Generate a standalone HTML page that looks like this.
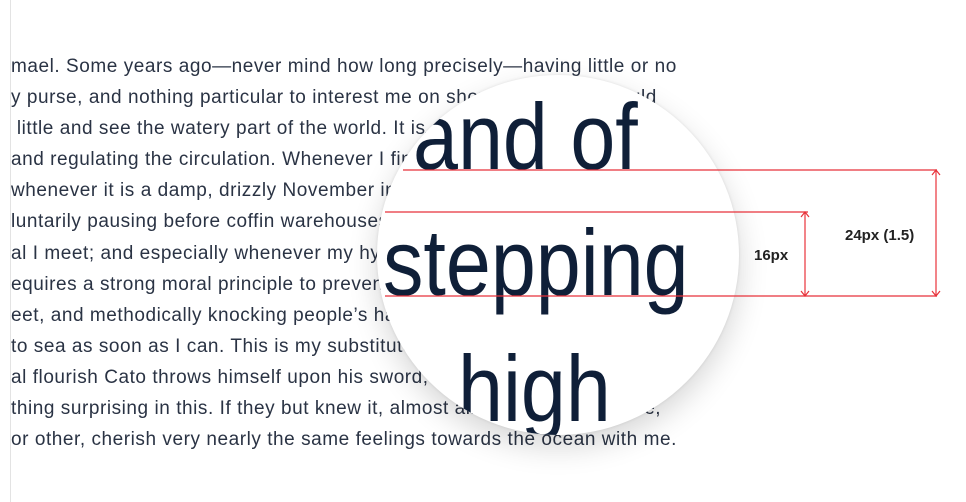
<!DOCTYPE html>
<html><head><style>
html,body{margin:0;padding:0;background:#fff;width:966px;height:502px;overflow:hidden;position:relative}
.rule{position:absolute;left:10px;top:0;width:1px;height:502px;background:#e3e3e3}
.txt{position:absolute;left:11px;top:51px;font-family:"Liberation Sans",sans-serif;font-size:19px;letter-spacing:0.55px;line-height:31.1px;color:#2a3344;white-space:nowrap}
.circle{position:absolute;left:377px;top:75px;width:362px;height:360px;border-radius:50%;background:#fff;box-shadow:0 12px 30px rgba(0,0,0,0.16),0 0 3px rgba(0,0,0,0.1);overflow:hidden}
.big{position:absolute;font-family:"Liberation Sans",sans-serif;font-size:94px;color:#0f1f38;white-space:nowrap;line-height:1;transform:scaleX(0.86);transform-origin:0 0}
.lbl{position:absolute;font-family:"Liberation Sans",sans-serif;font-weight:bold;font-size:15px;color:#222}
</style></head><body>
<div class="rule"></div>
<div class="txt">
mael. Some years ago—never mind how long precisely—having little or no<br>
y purse, and nothing particular to interest me on shore, I thought I would<br>
&nbsp;little and see the watery part of the world. It is a way I have of driving<br>
and regulating the circulation. Whenever I find myself growing grim<br>
whenever it is a damp, drizzly November in my soul; whenever I find<br>
luntarily pausing before coffin warehouses, and bringing up the<br>
al I meet; and especially whenever my hypos get such an upper<br>
equires a strong moral principle to prevent me from deliberately<br>
eet, and methodically knocking people’s hats off—then, I account it<br>
to sea as soon as I can. This is my substitute for pistol and ball.<br>
al flourish Cato throws himself upon his sword; I quietly take to the<br>
thing surprising in this. If they but knew it, almost all men in their degree,<br>
or other, cherish very nearly the same feelings towards the ocean with me.
</div>
<div class="circle">
<div class="big" style="left:36px;top:15px">and of</div>
<div class="big" style="left:6px;top:141px">stepping</div>
<div class="big" style="left:81px;top:267px">high</div>
</div>
<svg width="966" height="502" style="position:absolute;left:0;top:0" fill="none" stroke="#e8323a" stroke-width="1.2">
<line x1="403" y1="170" x2="937" y2="170"/>
<line x1="385" y1="212" x2="808" y2="212"/>
<line x1="385" y1="296" x2="937" y2="296"/>
<line x1="805" y1="212" x2="805" y2="296"/>
<line x1="936" y1="170" x2="936" y2="296"/>
<path d="M801 217 L805 212 L809 217 M801 291 L805 296 L809 291"/>
<path d="M932 175 L936 170 L940 175 M932 291 L936 296 L940 291"/>
</svg>
<div class="lbl" style="left:754px;top:247px">16px</div>
<div class="lbl" style="left:845px;top:227px">24px (1.5)</div>
</body></html>
